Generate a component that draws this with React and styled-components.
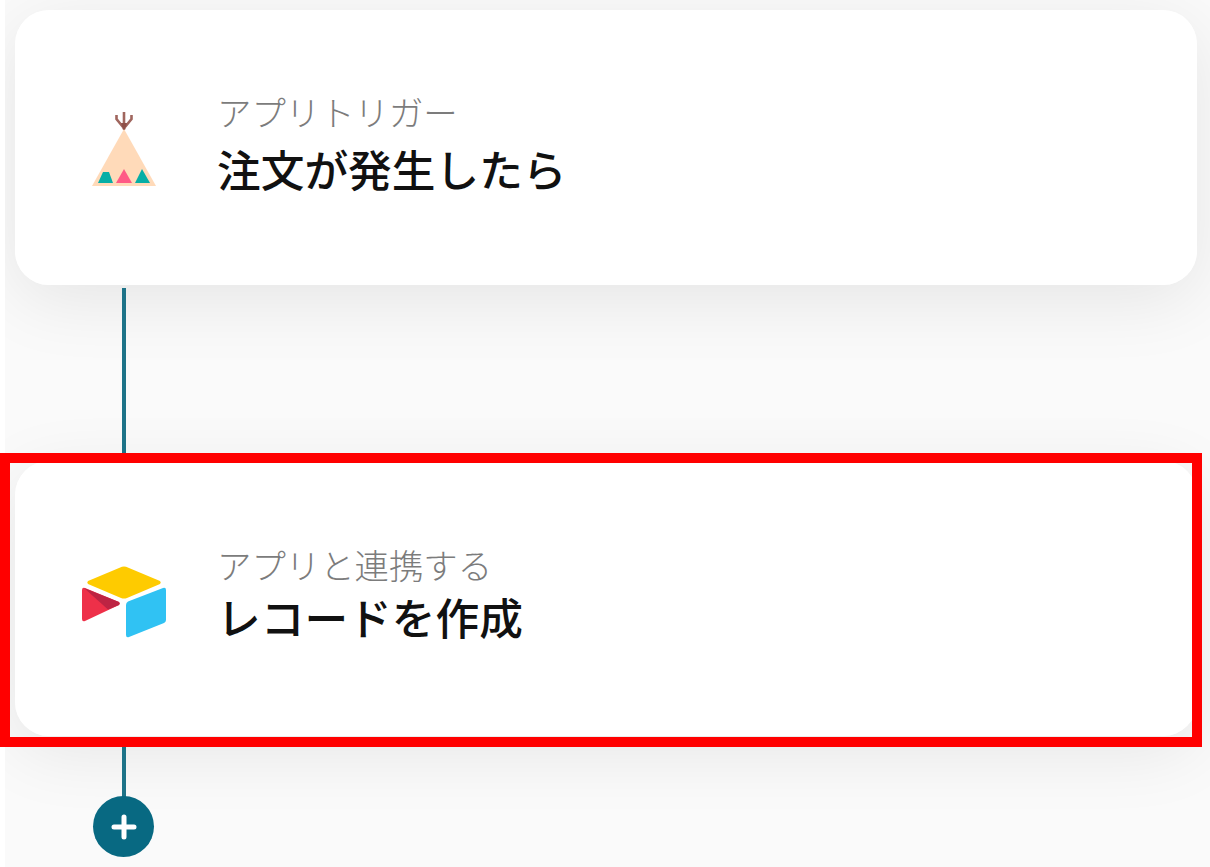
import styled, { createGlobalStyle } from 'styled-components'


function App() {
  return (
    <>
      <GlobalStyle />
      <Flow>
        <Step>
          <IconSlot $drop={1}>
            <TentIcon />
          </IconSlot>
          <StepText $lift={16}>
            <StepLabel>アプリトリガー</StepLabel>
            <StepTitle $leading={58}>注文が発生したら</StepTitle>
          </StepText>
        </Step>
        <Connector $height={173} />
        <Step>
          <IconSlot $drop={3}>
            <AirtableIcon />
          </IconSlot>
          <StepText $lift={21}>
            <StepLabel>アプリと連携する</StepLabel>
            <StepTitle $leading={48}>レコードを作成</StepTitle>
          </StepText>
          <Highlight />
        </Step>
        <Connector $height={58} />
        <AddButton aria-label='追加'>
          <PlusIcon />
        </AddButton>
      </Flow>
    </>
  )
}

function TentIcon() {
  return (
    <svg width='64' height='76' viewBox='0 0 64 76'>
      <path d='M24.500 4V8L31 16M39.500 4V8L33 16M32 1V18' fill='none' stroke='#a0665e' strokeWidth='2.6' />
      <path d='M29 12H35L33 19H31Z' fill='#8f5048' />
      <path d='M32 18L64 75H0Z' fill='#ffdab9' />
      <path d='M6 72L11 61H17L21 72Z' fill='#06aea6' />
      <path d='M24 72L32 58L40 72Z' fill='#ff5a86' />
      <path d='M43 72L50 58L58 72Z' fill='#06aea6' />
    </svg>
  )
}

function AirtableIcon() {
  return (
    <svg width='86' height='72' viewBox='0 0 86 72'>
      <path d='M41 .8Q43 0 45 .8L79 15Q80.500 16.500 79 18L46 32Q43 33 40 32L7 18Q5.500 16.500 7 15Z' fill='#fecb00' />
      <path d='M1 24Q1 21 4 22L38 36Q39.5 37.5 38 39L4 55Q1 56 1 53Z' fill='#ee3049' />
      <path d='M3 22L38 36Q39.5 37.5 38 39L27 43.500Z' fill='#bd2443' />
      <path d='M45 39Q45 36.500 47 35.500L82 22Q85 21 85 24V54Q85 56 83 57L48 71Q45 72 45 69Z' fill='#30c2f3' />
    </svg>
  )
}

function PlusIcon() {
  return (
    <svg width='26' height='26' viewBox='0 0 26 26'>
      <path d='M13 3V23M3 13H23' fill='none' stroke='#fff' strokeWidth='5' strokeLinecap='round' />
    </svg>
  )
}

const GlobalStyle = createGlobalStyle`
  * {
    box-sizing: border-box;
  }

  body {
    margin: 0;
    background-color: #fff;
    font-family: "Noto Sans CJK JP", sans-serif;
  }
`

const Flow = styled.main`
  display: flex;
  flex-direction: column;
  align-items: flex-start;
  width: 1210px;
  height: 867px;
  padding: 10px 0 0 15px;
  overflow: hidden;
  isolation: isolate;
  background: linear-gradient(to right, #fff 5px, #fafafa 5px);
`

const Step = styled.section`
  position: relative;
  display: flex;
  flex: none;
  align-items: center;
  width: 1182px;
  height: 275px;
  padding-left: 66px;
  border-radius: 34px;
  background-color: #fff;

  /* the shadow stops at the edge of the grey canvas */
  &::before {
    content: '';
    position: absolute;
    inset: 0;
    z-index: -1;
    border-radius: inherit;
    box-shadow: 0 15px 70px rgba(0, 0, 0, 0.085);
    clip-path: inset(-120px -20px -120px -10px);
  }
`

const IconSlot = styled.div`
  display: flex;
  justify-content: center;
  width: 86px;
  padding-top: ${props => props.$drop * 2}px;
`

const StepText = styled.div`
  padding: 0 0 ${props => props.$lift}px 50px;
  white-space: nowrap;
`

const StepLabel = styled.p`
  margin: 0;
  font-size: 34.4px;
  font-weight: 300;
  line-height: 56px;
  color: #7c7c7c;
`

const StepTitle = styled.h2`
  margin: 0;
  font-size: 43.7px;
  font-weight: 500;
  line-height: ${props => props.$leading}px;
  color: #111;
`

const Highlight = styled.div`
  position: absolute;
  top: -8px;
  left: -15px;
  z-index: 1;
  width: 1202px;
  height: 294px;
  border: 10px solid #f00;
`

const Connector = styled.div`
  flex: none;
  width: 4px;
  height: ${props => props.$height}px;
  margin-top: 3px;
  margin-left: 107px;
  background-color: #1d7388;
`

const AddButton = styled.button`
  display: flex;
  flex: none;
  align-items: center;
  justify-content: center;
  width: 61px;
  height: 61px;
  margin: -1px 0 0 78px;
  padding: 0;
  border: 0;
  border-radius: 50%;
  background-color: #086982;
`

export default App
